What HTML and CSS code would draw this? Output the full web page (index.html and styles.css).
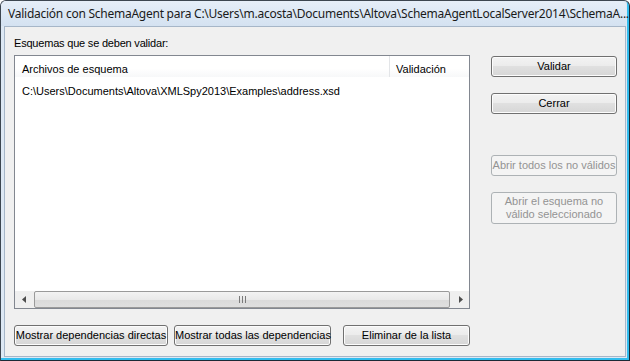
FILE: index.html
```html
<!DOCTYPE html>
<html lang="es">
<head>
<meta charset="utf-8">
<title>Validación con SchemaAgent</title>
<link rel="stylesheet" href="styles.css">
</head>
<body>
<div class="window">
  <div class="titlebar"><span class="title">Validación con SchemaAgent para C:\Users\m.acosta\Documents\Altova\SchemaAgentLocalServer2014\SchemaA...</span></div>
  <div class="client">
    <div class="label">Esquemas que se deben validar:</div>
    <div class="main">
      <div class="list">
        <div class="list-header">
          <div class="col col-file">Archivos de esquema</div>
          <div class="col col-valid">Validación</div>
          <div class="col col-rest"></div>
        </div>
        <div class="list-body">
          <div class="row">C:\Users\Documents\Altova\XMLSpy2013\Examples\address.xsd</div>
        </div>
        <div class="hscroll">
          <div class="arrow arrow-left"><svg width="4" height="7" viewBox="0 0 4 7"><path d="M4 0 L0 3.5 L4 7 Z" fill="#4d4d4d"/></svg></div>
          <div class="thumb"><svg width="7" height="7" viewBox="0 0 7 7"><path d="M0.5 0 V7 M3.5 0 V7 M6.5 0 V7" stroke="#7a7a7a" stroke-width="1"/></svg></div>
          <div class="arrow arrow-right"><svg width="4" height="7" viewBox="0 0 4 7"><path d="M0 0 L4 3.5 L0 7 Z" fill="#4d4d4d"/></svg></div>
        </div>
      </div>
      <div class="side">
        <button class="btn btn-first">Validar</button>
        <button class="btn btn-second">Cerrar</button>
        <button class="btn btn-third" disabled>Abrir todos los no válidos</button>
        <button class="btn btn-tall" disabled>Abrir el esquema no<br>válido seleccionado</button>
      </div>
    </div>
    <div class="bottom">
      <button class="btn btn-b1">Mostrar dependencias directas</button>
      <button class="btn btn-b2">Mostrar todas las dependencias</button>
      <button class="btn btn-b3">Eliminar de la lista</button>
    </div>
  </div>
</div>
</body>
</html>
```

FILE: styles.css
```css
* { box-sizing: border-box; }
html, body { margin: 0; padding: 0; background: #ffffff; }
body { width: 630px; height: 361px; overflow: hidden; }

.window {
  width: 630px;
  height: 361px;
  border: 1px solid #3d4650;
  border-right-color: #1c2a36;
  border-bottom-color: #1c2a36;
  border-radius: 6px 6px 0 0;
  background: #dde8f4;
  display: flex;
  flex-direction: column;
  padding: 0 1px 1px 3px;
  box-shadow: inset -2px -2px 0 #32bdee;
}

.titlebar {
  height: 26px;
  display: flex;
  align-items: center;
  background: linear-gradient(#e6eef8, #d4e2f1);
  border-radius: 5px 5px 0 0;
  margin: 0 2px 0 -3px;
  padding-left: 7px;
}
.title {
  font-family: "Noto Sans", sans-serif;
  font-size: 12px;
  color: #1a1a1a;
  white-space: nowrap;
  letter-spacing: -0.25px;
}

.client {
  flex: 1;
  background: #f0f0f0;
  border: 1px solid #a6b6c8;
  margin-right: 2px;
  margin-bottom: 2px;
  display: flex;
  flex-direction: column;
  padding: 9px 10px 10px 9px;
  font-family: "Liberation Sans", Arial, sans-serif;
  font-size: 11px;
  color: #000;
}

.label { height: 19px; line-height: 14px; letter-spacing: -0.2px; }

.main { display: flex; gap: 21px; height: 254px; }

.list {
  width: 456px;
  flex-shrink: 0;
  border: 1px solid #828790;
  background: #fff;
  display: flex;
  flex-direction: column;
}
.list-header { display: flex; height: 21px; background: linear-gradient(#ffffff, #ffffff 60%, #f7f8f9); }
.col { flex-shrink: 0; line-height: 27px; padding-left: 7px; border-right: 1px solid #e3e5e8; height: 21px; white-space: nowrap; }
.col-file { width: 375px; }
.col-valid { width: 79px; padding-left: 6px; border-right: none; }
.col-rest { flex: 1; border: none; }
.list-body { flex: 1; padding-top: 7px; }
.row { padding-left: 7px; line-height: 15px; white-space: nowrap; }

.hscroll {
  height: 17px;
  display: flex;
  align-items: stretch;
  background: #efefef;
}
.arrow { width: 17px; flex-shrink: 0; display: flex; align-items: center; justify-content: center; }
.thumb {
  flex: 1;
  margin: 0 2px;
  border: 1px solid #9a9a9a;
  border-radius: 2px;
  background: linear-gradient(#f3f3f3, #e9e9e9 50%, #dadada 51%, #dfdfdf);
  display: flex;
  align-items: center;
  justify-content: center;
}

.side { width: 126px; flex-shrink: 0; display: flex; flex-direction: column; }

.btn {
  font-family: inherit;
  font-size: 11px;
  color: #000;
  border: 1px solid #707070;
  border-radius: 3px;
  background: linear-gradient(#f3f3f3, #ececec 45%, #e0e0e0 50%, #d6d6d6);
  padding: 0;
  height: 21px;
  line-height: 13px;
  text-align: center;
  white-space: nowrap;
  box-shadow: inset 0 0 0 1px #fcfcfc;
}
.btn:disabled {
  color: #939393;
  border-color: #adb2b5;
  background: #f4f4f4;
  box-shadow: none;
}
.btn-first { margin-top: 1px; }
.btn-second { margin-top: 16px; }
.btn-third { margin-top: 41px; }
.btn-tall { margin-top: 16px; height: 32px; line-height: 13px; }

.bottom { display: flex; margin-top: 16px; }
.btn-b1 { width: 154px; }
.btn-b2 { width: 157px; margin-left: 6px; }
.btn-b3 { width: 127px; margin-left: 12px; }
```
